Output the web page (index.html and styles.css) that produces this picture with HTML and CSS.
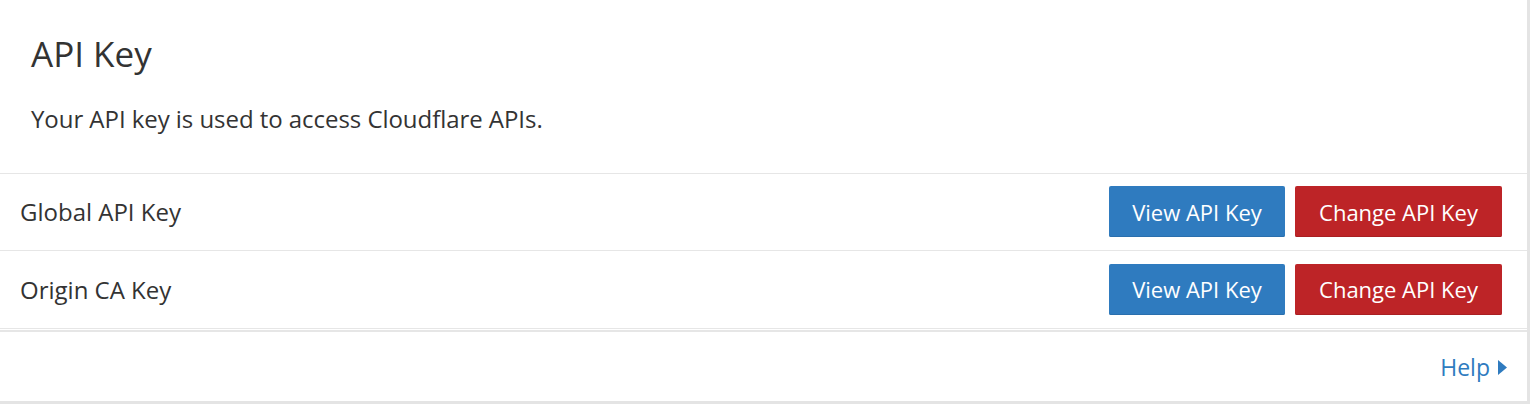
FILE: index.html
```html
<!DOCTYPE html>
<html lang="en">
<head>
<meta charset="utf-8">
<title>API Key</title>
<link rel="stylesheet" href="styles.css">
</head>
<body>
<div class="card">
  <div class="card-header">
    <h2 class="title">API Key</h2>
    <p class="desc">Your API key is used to access Cloudflare APIs.</p>
  </div>
  <div class="rows">
    <div class="row">
      <span class="label">Global API Key</span>
      <div class="actions">
        <button class="btn btn-blue">View API Key</button>
        <button class="btn btn-red">Change API Key</button>
      </div>
    </div>
    <div class="row">
      <span class="label">Origin CA Key</span>
      <div class="actions">
        <button class="btn btn-blue">View API Key</button>
        <button class="btn btn-red">Change API Key</button>
      </div>
    </div>
  </div>
  <div class="card-footer">
    <a class="help" href="#">Help <svg class="caret" width="9" height="15" viewBox="0 0 9 15"><path d="M0 0 L9 7.5 L0 15 Z" fill="#2f7bbf"/></svg></a>
  </div>
</div>
</body>
</html>
```

FILE: styles.css
```css
html, body {
  margin: 0;
  padding: 0;
  background: #ffffff;
}
body {
  font-family: "Open Sans", "Noto Sans", sans-serif;
  color: #333333;
}
.card {
  width: 1527px;
  height: 401px;
  border-right: 3px solid #e4e4e4;
  border-bottom: 3px solid #e4e4e4;
  display: flex;
  flex-direction: column;
  background: #fff;
}
.card-header {
  padding: 33px 31px 0 31px;
  height: 173px;
  box-sizing: border-box;
}
.title {
  margin: 0;
  font-size: 35px;
  line-height: 42px;
  font-weight: 400;
  color: #333;
}
.desc {
  margin: 26px 0 0 0;
  font-size: 24px;
  line-height: 36px;
  color: #333;
  letter-spacing: -0.05px;
}
.rows {
  border-top: 1px solid #e6e6e6;
}
.row {
  height: 77px;
  display: flex;
  align-items: center;
  justify-content: space-between;
  padding: 0 25px 0 20px;
  box-sizing: border-box;
  border-bottom: 1px solid #e6e6e6;
}
.row + .row {
  height: 78px;
}
.label {
  font-size: 24px;
  line-height: 36px;
  color: #333;
}
.actions {
  display: flex;
  gap: 10px;
  margin-top: -1px;
}
.btn {
  font-family: "Open Sans", "Noto Sans", sans-serif;
  font-size: 22px;
  line-height: 30px;
  height: 51px;
  padding: 0;
  border: 0;
  border-radius: 2px;
  color: #ffffff;
  cursor: pointer;
}
.btn-blue {
  width: 176px;
  background: #2f7bbf;
  box-shadow: inset 0 -1px 0 #2a6fad;
}
.btn-red {
  width: 207px;
  background: #bd2427;
  box-shadow: inset 0 -1px 0 #a91f22;
}
.card-footer {
  margin-top: 1px;
  border-top: 2px solid #e6e6e6;
  flex: 1;
  display: flex;
  align-items: center;
  justify-content: flex-end;
  padding-right: 20px;
}
.help {
  font-size: 23px;
  line-height: 30px;
  color: #2f7bbf;
  text-decoration: none;
  display: flex;
  align-items: center;
  gap: 8px;
  margin-top: 1px;
}
.caret {
  display: block;
  margin-top: 1px;
}
```
